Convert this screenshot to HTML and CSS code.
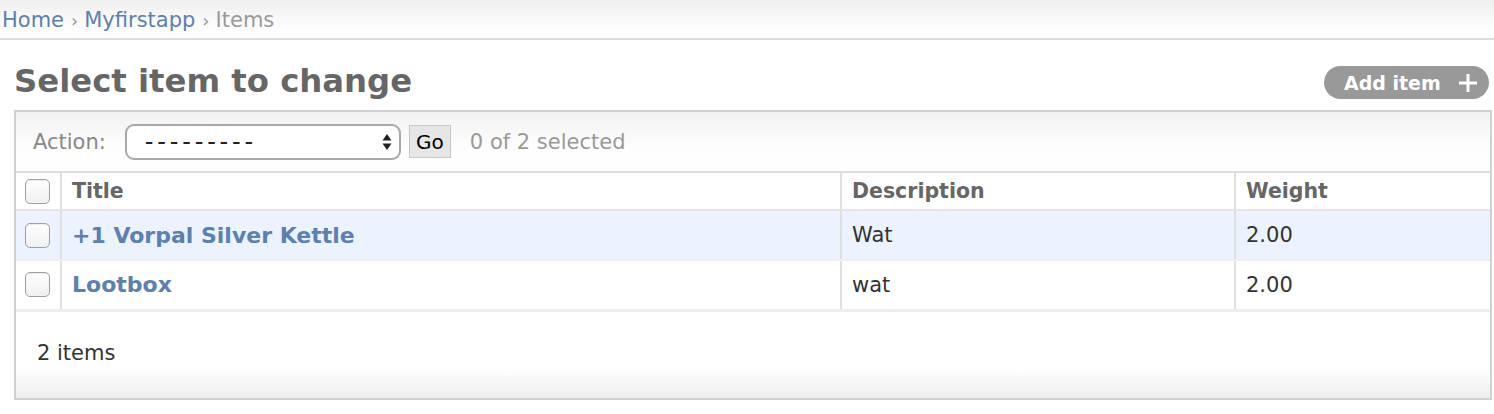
FILE: index.html
```html
<!DOCTYPE html>
<html>
<head>
<meta charset="utf-8">
<link rel="stylesheet" href="styles.css">
</head>
<body>
<div class="breadcrumbs">
  <a href="#">Home</a><span class="sep">›</span><a href="#">Myfirstapp</a><span class="sep">›</span><span class="current">Items</span>
</div>
<div class="content">
  <div class="title-row">
    <h1>Select item to change</h1>
    <a class="addlink" href="#">Add item<span class="plus"><svg width="20" height="20" viewBox="0 0 20 20"><path d="M10 1v18M1 10h18" stroke="#fff" stroke-width="3" fill="none"/></svg></span></a>
  </div>
  <div class="changelist">
    <div class="actions">
      <label class="action-label">Action:</label>
      <div class="select"><span class="select-value">---------</span><svg class="select-arrows" width="10" height="18" viewBox="0 0 10 18"><path d="M5 1L9.5 7.5H0.5Z M5 17L9.5 10.5H0.5Z" fill="#222"/></svg></div>
      <button class="go">Go</button>
      <span class="counter">0 of 2 selected</span>
    </div>
    <table class="results">
      <thead>
        <tr>
          <th class="cb-col"><span class="cb"></span></th>
          <th class="col-title">Title</th>
          <th class="col-desc">Description</th>
          <th class="col-weight">Weight</th>
        </tr>
      </thead>
      <tbody>
        <tr class="row1">
          <td class="cb-col"><span class="cb"></span></td>
          <th class="name"><a href="#">+1 Vorpal Silver Kettle</a></th>
          <td>Wat</td>
          <td>2.00</td>
        </tr>
        <tr class="row2">
          <td class="cb-col"><span class="cb"></span></td>
          <th class="name"><a href="#">Lootbox</a></th>
          <td>wat</td>
          <td>2.00</td>
        </tr>
      </tbody>
    </table>
    <p class="paginator">2 items</p>
  </div>
</div>
</body>
</html>
```
FILE: styles.css
```css
* { box-sizing: border-box; }
body {
  margin: 0;
  font-family: "DejaVu Sans", "Liberation Sans", sans-serif;
  color: #333;
  background: #fff;
}
a { color: #5b80b2; text-decoration: none; }

.breadcrumbs {
  height: 40px;
  padding: 7px 0 0 2px;
  font-size: 21px;
  line-height: 26px;
  background: linear-gradient(#eeeeee 0px, #fbfbfb 22px, #ffffff 38px);
  border-bottom: 2px solid #dddddd;
  color: #999;
  white-space: nowrap;
}
.breadcrumbs .sep { color: #999; margin: 0 6px 0 7px; font-size: 18px; }
.breadcrumbs .current { color: #999; }

.content { padding: 0 2px 0 14px; }

.title-row {
  display: flex;
  justify-content: space-between;
  align-items: flex-start;
  height: 70px;
}
h1 {
  margin: 21px 0 0 0;
  font-size: 32.3px;
  font-weight: bold;
  color: #666;
  line-height: 40px;
}
.addlink {
  margin-top: 26px;
  margin-right: 3px;
  height: 33px;
  width: 165px;
  border-radius: 17px;
  background: #999;
  color: #fff;
  font-weight: bold;
  font-size: 19px;
  display: flex;
  align-items: center;
  padding-left: 20px;
}
.addlink .plus { margin-left: 17px; display: flex; }

.changelist {
  border: 2px solid #d0d0d0;
  height: 290px;
  display: flex;
  flex-direction: column;
}
.actions {
  height: 59px;
  display: flex;
  align-items: center;
  padding-left: 17px;
  background: linear-gradient(#f2f2f2, #fdfdfd 60%, #ffffff);
  font-size: 21px;
}
.action-label { color: #888; margin-right: 19px; }
.select {
  width: 276px;
  height: 36px;
  border: 2px solid #a8a8a8;
  border-radius: 9px;
  background: #fff;
  display: flex;
  align-items: center;
  justify-content: space-between;
  padding: 0 7px 0 18px;
  color: #222;
}
.select-value { font-size: 24px; letter-spacing: 3.8px; line-height: 30px; }
.go {
  margin-left: 8px;
  width: 42px;
  height: 33px;
  border: 1px solid #c8c8c8;
  background: #e6e6e6;
  font-family: "DejaVu Sans", sans-serif;
  font-size: 20px;
  padding: 0;
  color: #000;
}
.counter { margin-left: 19px; color: #999; }

.results {
  width: 100%;
  border-collapse: collapse;
  font-size: 21px;
}
.results thead th {
  height: 38px;
  border-top: 2px solid #dddddd;
  border-bottom: 2px solid #e4e4e4;
  text-align: left;
  font-weight: bold;
  font-size: 20.5px;
  color: #666;
  padding: 0 10px;
  background: #fff;
}
.results th, .results td {
  border-left: 2px solid #e0e0e0;
  text-align: left;
  vertical-align: middle;
}
.results th:first-child, .results td:first-child { border-left: none; }
.results tbody td, .results tbody th {
  height: 50px;
  padding: 0 10px;
  border-bottom: 2px solid #eeeeee;
  color: #333;
  font-weight: normal;
}
.results tbody tr:last-child td, .results tbody tr:last-child th { border-bottom: 3px solid #eeeeee; }
.results .cb-col { width: 45px; padding: 0 0 0 9px; }
.results .col-title { width: 780px; }
.results .col-desc { width: 394px; }
.results tbody th.name a { font-weight: bold; font-size: 22px; color: #5b80b2; }
.row1 td, .row1 th { background: #edf3fe; }
.row2 td, .row2 th { background: #fff; }

.cb {
  display: block;
  width: 25px;
  height: 25px;
  border: 1px solid #a0a0a0;
  border-radius: 5px;
  background: linear-gradient(#ffffff, #f0f0f0);
  box-shadow: inset 0 1px 1px rgba(0,0,0,0.08);
}

.paginator {
  flex: 1;
  margin: 0;
  padding: 29px 0 0 21px;
  font-size: 21px;
  color: #333;
  background: linear-gradient(#ffffff 0px, #ffffff 55px, #eeeeee 86px);
}
```
